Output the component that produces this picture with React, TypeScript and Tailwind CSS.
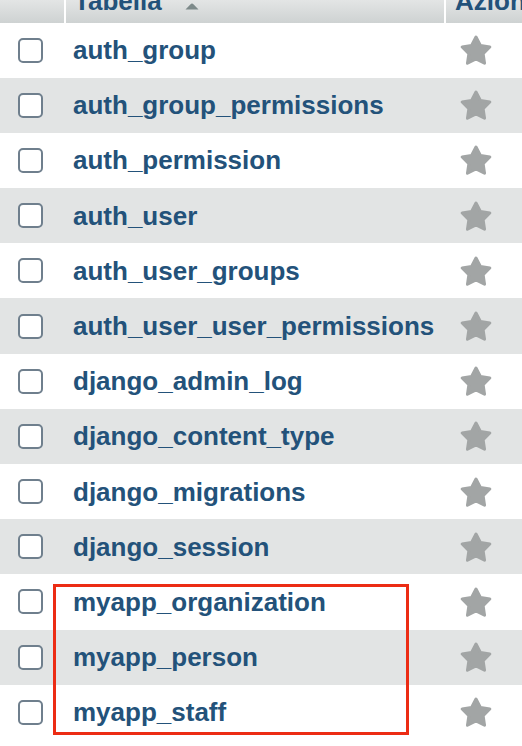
import React from 'react';

const tables = [
  'auth_group',
  'auth_group_permissions',
  'auth_permission',
  'auth_user',
  'auth_user_groups',
  'auth_user_user_permissions',
  'django_admin_log',
  'django_content_type',
  'django_migrations',
  'django_session',
  'myapp_organization',
  'myapp_person',
  'myapp_staff',
];

// rounded grey "favourite" star
const Star: React.FC = () => (
  <svg width="32" height="30" viewBox="0 0 32 30" aria-hidden="true">
    <polygon
      points="16,2 20.41,10.43 29.79,12.02 23.13,18.82 24.52,28.23 16,24 7.48,28.23 8.87,18.82 2.21,12.02 11.59,10.43"
      fill="#a2a5a5"
      stroke="#a2a5a5"
      strokeWidth="3"
      strokeLinejoin="round"
    />
  </svg>
);

const App: React.FC = () => {
  return (
    <div
      className="relative w-[522px] h-[746px] overflow-hidden bg-white"
      style={{ fontFamily: '"Liberation Sans", Arial, sans-serif' }}
    >
      {/* Header */}
      <div className="flex h-[22.5px] overflow-hidden bg-gradient-to-b from-[#e3e5e5] to-[#ced2d2] text-[26px] font-bold text-[#23527a]">
        <div className="w-[64px] shrink-0" />
        <div className="w-[2px] shrink-0 bg-white" />
        <div className="flex w-[378px] shrink-0 pl-[8px]">
          <span className="mt-[-12.5px] leading-[26px]">Tabella</span>
          <svg className="ml-[23px] mt-[3px]" width="14" height="7" viewBox="0 0 14 7" aria-hidden="true">
            <path d="M7 0.5c.6 0 1 .3 1.4.8L13.5 6.5H0.5L5.6 1.3C6 .8 6.4.5 7 .5z" fill="#7d8a8a" />
          </svg>
        </div>
        <div className="w-[2px] shrink-0 bg-white" />
        <div className="flex-1 pl-[9px]">
          <span className="block mt-[-12.5px] leading-[26px]">Azioni</span>
        </div>
      </div>

      {/* Rows */}
      {tables.map((name, i) => (
        <div
          key={name}
          className={`flex h-[55.2px] items-center ${i % 2 === 1 ? 'bg-[#e2e4e4]' : 'bg-white'}`}
        >
          <div className="flex w-[66px] shrink-0 pl-[18px]">
            <div className="h-[25px] w-[25px] rounded-[5px] border-2 border-[#6f7f8d] bg-white" />
          </div>
          <div className="w-[380px] shrink-0 pl-[7px] text-[26px] font-bold leading-none text-[#23527a]">
            {name}
          </div>
          <div className="flex pl-[14px]">
            <Star />
          </div>
        </div>
      ))}

      {/* Highlight annotation */}
      <div className="absolute left-[53px] top-[584px] h-[151px] w-[356px] border-[3px] border-[#ec2c14]" />
    </div>
  );
};

export default App;
